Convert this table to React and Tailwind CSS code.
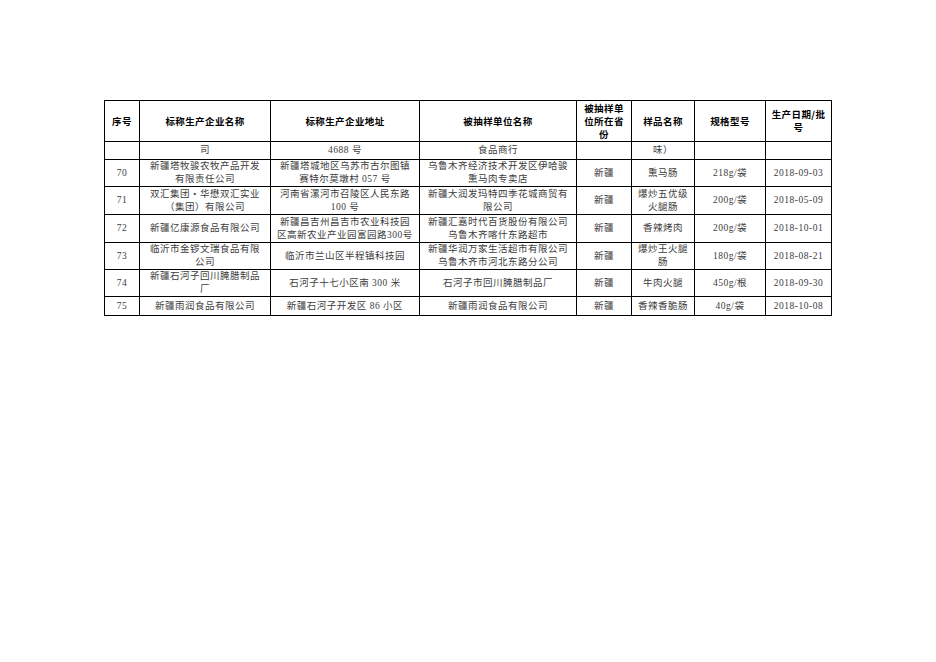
import React from "react";

const body = { fontFamily: '"Liberation Serif", "Noto Sans CJK SC", serif' };
const head = { fontFamily: '"Noto Sans CJK SC", "Liberation Sans", sans-serif' };

const widths = [35, 131, 149, 157, 55, 63, 71, 66];

const headers = [
  "序号",
  "标称生产企业名称",
  "标称生产企业地址",
  "被抽样单位名称",
  ["被抽样单", "位所在省", "份"],
  "样品名称",
  "规格型号",
  ["生产日期/批", "号"],
];

const rows = [
  { h: 18, c: ["", "司", "4688 号", "食品商行", "", "味）", "", ""] },
  {
    h: 27,
    c: [
      "70",
      ["新疆塔牧骏农牧产品开发", "有限责任公司"],
      ["新疆塔城地区乌苏市古尔图镇", "赛特尔莫墩村 057 号"],
      ["乌鲁木齐经济技术开发区伊哈骏", "熏马肉专卖店"],
      "新疆",
      "熏马肠",
      "218g/袋",
      "2018-09-03",
    ],
  },
  {
    h: 28,
    c: [
      "71",
      ["双汇集团・华懋双汇实业", "（集团）有限公司"],
      ["河南省漯河市召陵区人民东路", "100 号"],
      ["新疆大润发玛特四季花城商贸有", "限公司"],
      "新疆",
      ["爆炒五优级", "火腿肠"],
      "200g/袋",
      "2018-05-09",
    ],
  },
  {
    h: 28,
    c: [
      "72",
      "新疆亿康源食品有限公司",
      ["新疆昌吉州昌吉市农业科技园", "区高新农业产业园富园路300号"],
      ["新疆汇嘉时代百货股份有限公司", "乌鲁木齐喀什东路超市"],
      "新疆",
      "香辣烤肉",
      "200g/袋",
      "2018-10-01",
    ],
  },
  {
    h: 27,
    c: [
      "73",
      ["临沂市金锣文瑞食品有限", "公司"],
      "临沂市兰山区半程镇科技园",
      ["新疆华润万家生活超市有限公司", "乌鲁木齐市河北东路分公司"],
      "新疆",
      ["爆炒王火腿", "肠"],
      "180g/袋",
      "2018-08-21",
    ],
  },
  {
    h: 27,
    c: [
      "74",
      ["新疆石河子回川腌腊制品", "厂"],
      "石河子十七小区南 300 米",
      "石河子市回川腌腊制品厂",
      "新疆",
      "牛肉火腿",
      "450g/根",
      "2018-09-30",
    ],
  },
  {
    h: 19,
    c: [
      "75",
      "新疆雨润食品有限公司",
      "新疆石河子开发区 86 小区",
      "新疆雨润食品有限公司",
      "新疆",
      "香辣香脆肠",
      "40g/袋",
      "2018-10-08",
    ],
  },
];

function Lines({ v }) {
  if (Array.isArray(v)) {
    return v.map((line, i) => (
      <div key={i} className="whitespace-nowrap">
        {line}
      </div>
    ));
  }
  return <div className="whitespace-nowrap">{v}</div>;
}

export default function App() {
  return (
    <div className="w-[936px] h-[662px] bg-white pt-[100px] pl-[104px]">
      <table className="table-fixed border-collapse border border-black w-[728px]">
        <colgroup>
          {widths.map((w, i) => (
            <col key={i} style={{ width: w }} />
          ))}
        </colgroup>
        <thead>
          <tr>
            {headers.map((h, i) => (
              <th
                key={i}
                style={head}
                className="h-[41px] border border-black p-0 text-center align-middle text-[9.5px] leading-[13px] font-bold text-black tracking-[0.4px]"
              >
                <Lines v={h} />
              </th>
            ))}
          </tr>
        </thead>
        <tbody>
          {rows.map((r, ri) => (
            <tr key={ri}>
              {r.c.map((c, ci) => (
                <td
                  key={ci}
                  style={{ ...body, height: r.h }}
                  className="border border-black p-0 text-center align-middle text-[9.5px] leading-[13px] text-[#3c3c3c] tracking-[0.5px]"
                >
                  <Lines v={c} />
                </td>
              ))}
            </tr>
          ))}
        </tbody>
      </table>
    </div>
  );
}
